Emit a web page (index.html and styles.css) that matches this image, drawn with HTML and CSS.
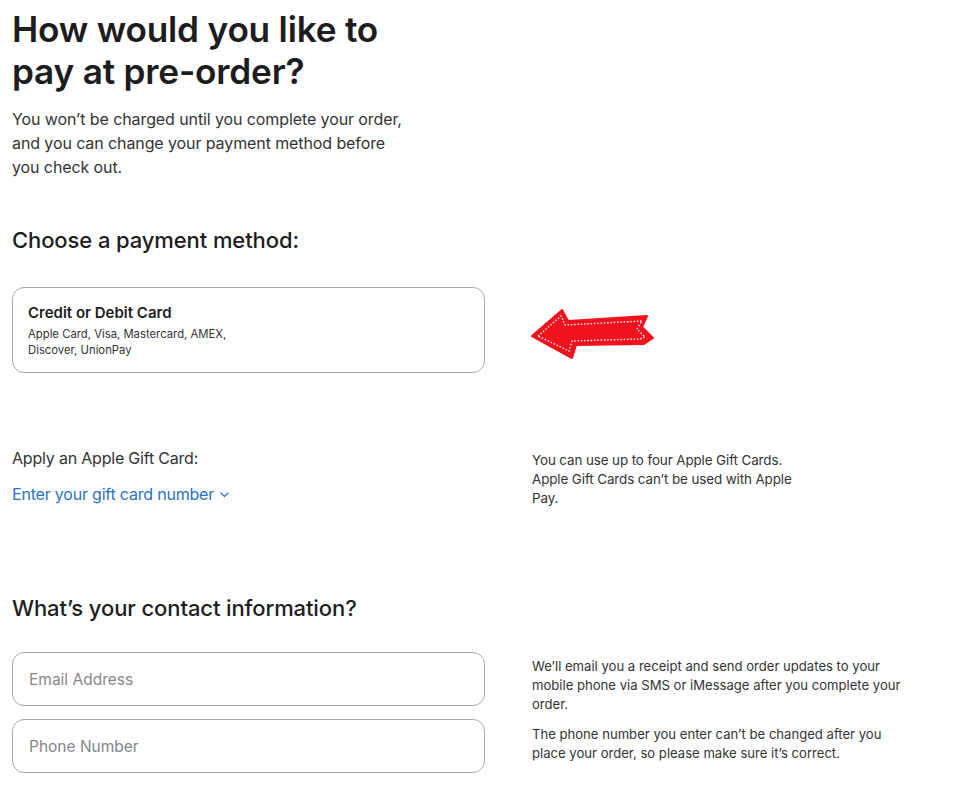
FILE: index.html
```html
<!DOCTYPE html>
<html lang="en">
<head>
<meta charset="utf-8">
<title>Checkout - Payment</title>
<link rel="stylesheet" href="styles.css">
</head>
<body>
<main class="page">
  <section class="intro">
    <h1 class="title">How would you like to pay at pre-order?</h1>
    <p class="lead">You won’t be charged until you complete your order, and you can change your payment method before you check out.</p>
  </section>

  <section class="payment">
    <h2 class="section-title">Choose a payment method:</h2>
    <div class="row">
      <div class="col-left">
        <div class="option-card">
          <div class="option-title">Credit or Debit Card</div>
          <div class="option-sub">Apple Card, Visa, Mastercard, AMEX,<br>Discover, UnionPay</div>
        </div>
      </div>
      <div class="col-right arrow-col">
        <svg class="arrow" width="124" height="52" viewBox="0 0 124 52" aria-hidden="true">
          <path d="M1 28 L31 2 L37 13 L116 8 L111 19 L122 30 L113 36 L45 37 L41 50 Z" fill="#f0121c" stroke="#f0121c" stroke-width="2" stroke-linejoin="round"/>
          <path d="M7 28 L30 8 L34 17 L111 13 L106 21 L114 29 L109 31 L41 33 L38 43 Z" fill="none" stroke="#ffffff" stroke-width="1.4" stroke-dasharray="1.5 1.8" stroke-linejoin="round"/>
        </svg>
      </div>
    </div>
  </section>

  <section class="giftcard row">
    <div class="col-left">
      <div class="gift-label">Apply an Apple Gift Card:</div>
      <a class="gift-link" href="#">Enter your gift card number <svg class="chev" width="9" height="6" viewBox="0 0 9 6" aria-hidden="true"><path d="M1 1 L4.5 4.5 L8 1" fill="none" stroke="#2a72c2" stroke-width="1.2" stroke-linecap="round" stroke-linejoin="round"/></svg></a>
    </div>
    <div class="col-right">
      <p class="note narrow">You can use up to four Apple Gift Cards. Apple Gift Cards can’t be used with Apple Pay.</p>
    </div>
  </section>

  <section class="contact">
    <h2 class="section-title">What’s your contact information?</h2>
    <div class="row">
      <div class="col-left fields">
        <div class="field"><span class="placeholder">Email Address</span></div>
        <div class="field"><span class="placeholder">Phone Number</span></div>
      </div>
      <div class="col-right contact-notes">
        <p class="note">We’ll email you a receipt and send order updates to your mobile phone via SMS or iMessage after you complete your order.</p>
        <p class="note">The phone number you enter can’t be changed after you place your order, so please make sure it’s correct.</p>
      </div>
    </div>
  </section>
</main>
</body>
</html>
```

FILE: styles.css
```css
* { box-sizing: border-box; }

html, body {
  margin: 0;
  padding: 0;
  background: #ffffff;
}

body {
  font-family: Inter, "Noto Sans", "Liberation Sans", sans-serif;
  color: #1d1d1f;
}

.page {
  padding: 8px 12px 0 12px;
  width: 966px;
}

.title {
  margin: 0;
  width: 390px;
  font-size: 35.2px;
  line-height: 42px;
  font-weight: 600;
  letter-spacing: -0.2px;
  color: #1d1d1f;
}

.lead {
  margin: 15px 0 0 0;
  width: 392px;
  font-size: 16px;
  line-height: 24px;
  color: #333336;
  letter-spacing: -0.1px;
}

.section-title {
  margin: 0;
  font-size: 22px;
  line-height: 28px;
  font-weight: 500;
  color: #1d1d1f;
  letter-spacing: -0.1px;
}

.payment {
  margin-top: 47px;
}

.row {
  display: flex;
  gap: 47px;
}

.col-left {
  width: 473px;
  flex: none;
}

.col-right {
  flex: 1;
}

.payment .row {
  margin-top: 33px;
}

.option-card {
  height: 86px;
  border: 1px solid #a8a8ad;
  border-radius: 12px;
  padding: 15px 15px;
}

.option-title {
  font-size: 15px;
  line-height: 20px;
  font-weight: 600;
  color: #1d1d1f;
}

.option-sub {
  margin-top: 3px;
  font-size: 11.3px;
  line-height: 16px;
  color: #333336;
}

.arrow-col {
  padding-top: 21px;
}

.arrow {
  display: block;
  margin-left: -1px;
}

.giftcard {
  margin-top: 75px;
}

.gift-label {
  font-size: 16px;
  line-height: 20px;
  color: #333336;
  letter-spacing: -0.2px;
}

.gift-link {
  display: inline-block;
  margin-top: 16px;
  font-size: 16px;
  line-height: 20px;
  color: #2a72c2;
  text-decoration: none;
  letter-spacing: -0.2px;
}

.chev {
  vertical-align: 2px;
  margin-left: 2px;
}

.note {
  margin: 0;
  font-size: 13.1px;
  line-height: 19px;
  color: #333336;
}

.narrow {
  width: 272px;
  padding-top: 3px;
  font-size: 13.4px;
  letter-spacing: -0.1px;
}

.contact {
  margin-top: 86px;
}

.contact .row {
  margin-top: 30px;
}

.fields {
  display: flex;
  flex-direction: column;
  gap: 13px;
}

.field {
  height: 54px;
  border: 1px solid #a8a8ad;
  border-radius: 12px;
  padding: 0 16px;
  display: flex;
  align-items: center;
}

.placeholder {
  font-size: 15.5px;
  color: #86868b;
}

.contact-notes {
  display: flex;
  flex-direction: column;
  gap: 11px;
  padding-top: 5px;
}

.contact-notes .note {
  width: 370px;
}
```
